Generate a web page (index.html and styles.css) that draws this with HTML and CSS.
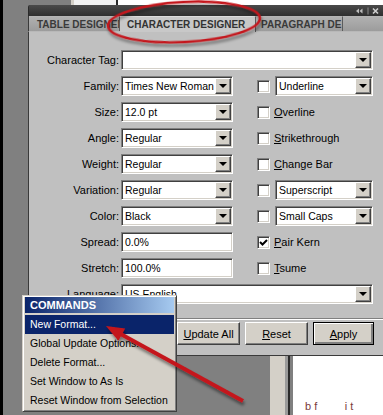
FILE: index.html
```html
<!DOCTYPE html>
<html>

<head>
    <title>Character Designer</title>
    <link rel="stylesheet" href="styles.css">
</head>

<body>
    <div class="screen">
        <!-- Window edges behind the panel -->
        <div class="backdrop-top">
            <span class="bd-gray"></span>
            <span class="bd-edge"></span>
            <span class="bd-light"></span>
            <span class="bd-line"></span>
            <span class="bd-white"></span>
        </div>

        <!-- Character designer panel -->
        <div class="panel">
            <div class="titlebar">
                <svg class="tb-icons" width="24" height="8" viewBox="0 0 24 8">
                    <polygon points="0,4 3,1.5 3,6.5" fill="#bdbdbd" />
                    <polygon points="3.5,4 6.5,1.5 6.5,6.5" fill="#bdbdbd" />
                    <line x1="12" y1="0.5" x2="12" y2="7.5" stroke="#8a8a8a" stroke-width="1" />
                    <path d="M17 1.5 L22 6.5 M22 1.5 L17 6.5" stroke="#cfcfcf" stroke-width="1.6" />
                </svg>
            </div>
            <div class="tabs">
                <div class="tab tab-table">TABLE DESIGNER</div>
                <div class="tab tab-active">CHARACTER DESIGNER</div>
                <div class="tab tab-para">PARAGRAPH DE</div>
                <div class="tab tab-rest"></div>
            </div>

            <div class="panel-body">
                <div class="row">
                    <span class="lbl">Character Tag:</span>
                    <div class="field wide"><span class="val"></span><span class="drop"></span></div>
                </div>
                <div class="row">
                    <span class="lbl">Family:</span>
                    <div class="field"><span class="val">Times New Roman</span><span class="drop"></span></div>
                    <span class="check"></span>
                    <div class="field small"><span class="val">Underline</span><span class="drop"></span></div>
                </div>
                <div class="row">
                    <span class="lbl">Size:</span>
                    <div class="field"><span class="val">12.0 pt</span><span class="drop"></span></div>
                    <span class="check"></span>
                    <span class="opt"><u>O</u>verline</span>
                </div>
                <div class="row">
                    <span class="lbl">Angle:</span>
                    <div class="field"><span class="val">Regular</span><span class="drop"></span></div>
                    <span class="check"></span>
                    <span class="opt"><u>S</u>trikethrough</span>
                </div>
                <div class="row">
                    <span class="lbl">Weight:</span>
                    <div class="field"><span class="val">Regular</span><span class="drop"></span></div>
                    <span class="check"></span>
                    <span class="opt"><u>C</u>hange Bar</span>
                </div>
                <div class="row">
                    <span class="lbl">Variation:</span>
                    <div class="field"><span class="val">Regular</span><span class="drop"></span></div>
                    <span class="check"></span>
                    <div class="field small"><span class="val">Superscript</span><span class="drop"></span></div>
                </div>
                <div class="row">
                    <span class="lbl">Color:</span>
                    <div class="field"><span class="val">Black</span><span class="drop"></span></div>
                    <span class="check"></span>
                    <div class="field small"><span class="val">Small Caps</span><span class="drop"></span></div>
                </div>
                <div class="row">
                    <span class="lbl">Spread:</span>
                    <div class="field"><span class="val">0.0%</span></div>
                    <span class="check">
                        <svg width="9" height="9" viewBox="0 0 9 9">
                            <path d="M1 4 L3.5 6.5 L8 2" stroke="#000" stroke-width="2" fill="none" />
                        </svg>
                    </span>
                    <span class="opt"><u>P</u>air Kern</span>
                </div>
                <div class="row">
                    <span class="lbl">Stretch:</span>
                    <div class="field"><span class="val">100.0%</span></div>
                    <span class="check"></span>
                    <span class="opt"><u>T</u>sume</span>
                </div>
                <div class="row">
                    <span class="lbl">Language:</span>
                    <div class="field wide"><span class="val">US English</span><span class="drop"></span></div>
                </div>

                <div class="separator"></div>

                <div class="buttons">
                    <button class="btn btn-update"><u>U</u>pdate All</button>
                    <button class="btn btn-reset"><u>R</u>eset</button>
                    <button class="btn btn-apply"><u>A</u>pply</button>
                </div>
            </div>
        </div>

        <div class="backdrop-bottom">
            <span class="bd-gray"></span>
            <span class="bd-edge wide-edge"></span>
            <span class="bd-mid"></span>
            <span class="bd-line"></span>
            <span class="bd-white"><span class="doc-text">b f&nbsp;&nbsp;&nbsp;&nbsp;&nbsp;&nbsp;&nbsp;&nbsp;&nbsp;i t</span></span>
        </div>

        <!-- Commands popup menu -->
        <div class="menu">
            <div class="menu-head">COMMANDS</div>
            <div class="menu-item selected">New Format...</div>
            <div class="menu-item">Global Update Options...</div>
            <div class="menu-item">Delete Format...</div>
            <div class="menu-item">Set Window to As Is</div>
            <div class="menu-item">Reset Window from Selection</div>
        </div>

        <!-- Red annotation marks -->
        <svg class="marks" width="380" height="415" viewBox="3 0 380 415">
            <defs>
                <filter id="shadow" x="-20%" y="-30%" width="140%" height="180%">
                    <feDropShadow dx="1" dy="3" stdDeviation="1.4" flood-color="#000" flood-opacity="0.45" />
                </filter>
            </defs>
            <ellipse cx="184" cy="22" rx="76" ry="20" fill="none" stroke="#c4161c" stroke-width="2.5"
                transform="rotate(-3 184 22)" filter="url(#shadow)" />
            <g filter="url(#shadow)">
                <line x1="243" y1="401" x2="117" y2="332" stroke="#c4161c" stroke-width="4" />
                <polygon points="106,326 118.4,340.7 125.2,328.5" fill="#c4161c" />
            </g>
        </svg>
    </div>
</body>

</html>
```

FILE: styles.css
```css
body {
    margin: 0;
    padding: 0;
    background-color: #000;
    font-family: "Liberation Sans", Arial, sans-serif;
    font-size: 11px;
    color: #000;
}

.screen {
    position: relative;
    margin-left: 3px;
    width: 380px;
    height: 415px;
    background-color: #808080;
    display: flex;
    flex-direction: column;
    overflow: hidden;
}

/* Backdrop window edges */
.backdrop-top {
    display: flex;
    height: 5px;
    flex-shrink: 0;
}

.backdrop-top .bd-gray {
    width: 68px;
}

.bd-edge {
    width: 3px;
    background-color: #d4d0c8;
}

.backdrop-top .bd-light {
    width: 42px;
    background-color: #f2f2f2;
}

.bd-line {
    width: 2px;
    background-color: #2a2a2a;
}

.bd-white {
    flex: 1;
    background-color: #fff;
}

.backdrop-bottom {
    flex: 1;
    display: flex;
}

.backdrop-bottom .bd-gray {
    width: 267px;
}

.backdrop-bottom .wide-edge {
    width: 15px;
}

.bd-mid {
    width: 3px;
    background-color: #9a9a9a;
}

.backdrop-bottom .bd-white {
    position: relative;
    margin-left: 3px;
    overflow: hidden;
}

.doc-text {
    display: block;
    margin: 44px 0 0 12px;
    font-size: 11px;
    color: #7a3a3a;
    white-space: nowrap;
}

/* Panel */
.panel {
    margin-left: 25px;
    height: 351px;
    flex-shrink: 0;
    display: flex;
    flex-direction: column;
}

.titlebar {
    height: 11px;
    background: linear-gradient(#4a4a4a, #2f2f2f);
    border-left: 1px solid #2a2a2a;
    border-radius: 2px 0 0 0;
    display: flex;
    justify-content: flex-end;
    align-items: center;
    padding-right: 3px;
}

.tabs {
    height: 16px;
    display: flex;
    background-color: #9e9e9e;
    border-left: 1px solid #3a3a3a;
    border-bottom: 1px solid #b8b8b8;
    box-sizing: border-box;
}

.tab {
    height: 100%;
    box-sizing: border-box;
    font-size: 10px;
    font-weight: bold;
    color: #3a3a3a;
    line-height: 15px;
    white-space: nowrap;
    overflow: hidden;
    border-right: 1px solid #5c5c5c;
    border-top: 1px solid #b4b4b4;
    background: linear-gradient(#b0b0b0, #9c9c9c);
}

.tab-table {
    width: 91px;
    padding-left: 8px;
}

.tab-active {
    width: 136px;
    padding-left: 7px;
    background: #c8c8c8;
    border-top-color: #dcdcdc;
    color: #333;
    height: 16px;
}

.tab-para {
    width: 87px;
    padding-left: 5px;
}

.tab-rest {
    flex: 1;
    border-right: none;
}

.panel-body {
    flex: 1;
    background-color: #c0c0c0;
    border-left: 1px solid #3a3a3a;
    border-bottom: 1px solid #3a3a3a;
    padding-top: 18px;
    display: flex;
    flex-direction: column;
    gap: 6px;
}

.row {
    display: flex;
    align-items: center;
    height: 20px;
}

.lbl {
    width: 90px;
    text-align: right;
    margin-right: 2px;
    white-space: nowrap;
}

/* Sunken fields */
.field {
    display: flex;
    width: 112px;
    height: 20px;
    box-sizing: border-box;
    padding: 1px;
    background-color: #fff;
    border: 1px solid;
    border-color: #808080 #fff #fff #808080;
    box-shadow: inset 1px 1px #404040, inset -1px -1px #d4d0c8;
}

.field.wide {
    width: 252px;
}

.field.small {
    width: 98px;
    margin-left: 5px;
}

.val {
    flex: 1;
    padding-left: 2px;
    font-size: 10.5px;
    line-height: 16px;
    white-space: nowrap;
    overflow: hidden;
}

.drop {
    position: relative;
    width: 16px;
    height: 16px;
    box-sizing: border-box;
    background-color: #d4d0c8;
    border: 1px solid;
    border-color: #fff #404040 #404040 #fff;
    box-shadow: inset -1px -1px #808080;
}

.drop::after {
    content: "";
    position: absolute;
    left: 3px;
    top: 5px;
    border-left: 4px solid transparent;
    border-right: 4px solid transparent;
    border-top: 4px solid #000;
}

.check {
    width: 13px;
    height: 13px;
    box-sizing: border-box;
    margin-left: 24px;
    background-color: #fff;
    border: 1px solid;
    border-color: #808080 #fff #fff #808080;
    box-shadow: inset 1px 1px #404040, inset -1px -1px #d4d0c8;
    display: flex;
    align-items: center;
    justify-content: center;
}

.opt {
    margin-left: 4px;
    white-space: nowrap;
}

.separator {
    margin-top: 8px;
    border-top: 1px solid #808080;
    border-bottom: 1px solid #fff;
}

.buttons {
    display: flex;
    justify-content: flex-end;
    gap: 5px;
    padding-right: 9px;
    margin-top: -4px;
}

.btn {
    height: 23px;
    box-sizing: border-box;
    font-family: "Liberation Sans", Arial, sans-serif;
    font-size: 11px;
    color: #000;
    background-color: #d4d0c8;
    border: 1px solid;
    border-color: #fff #404040 #404040 #fff;
    box-shadow: inset -1px -1px #808080;
    padding: 0;
}

.btn-update {
    width: 63px;
}

.btn-reset {
    width: 63px;
}

.btn-apply {
    width: 61px;
    border-color: #000;
    box-shadow: inset 1px 1px #fff, inset -2px -2px #808080;
}

/* Popup menu */
.menu {
    position: absolute;
    left: 19px;
    top: 295px;
    width: 155px;
    height: 117px;
    box-sizing: border-box;
    background-color: #d4d0c8;
    border: 1px solid;
    border-color: #d4d0c8 #404040 #404040 #d4d0c8;
    box-shadow: inset 1px 1px #fff, inset -1px -1px #808080;
    padding: 1px 2px;
}

.menu-head {
    height: 16px;
    line-height: 16px;
    padding-left: 5px;
    font-weight: bold;
    color: #fff;
    background: linear-gradient(to right, #0a246a, #a6caf0);
    margin-bottom: 2px;
}

.menu-item {
    height: 19px;
    line-height: 18px;
    padding-left: 5px;
    font-size: 10.5px;
    white-space: nowrap;
    overflow: hidden;
}

.menu-item.selected {
    background-color: #0a246a;
    color: #fff;
}

.marks {
    position: absolute;
    left: 0;
    top: 0;
    pointer-events: none;
}
```
